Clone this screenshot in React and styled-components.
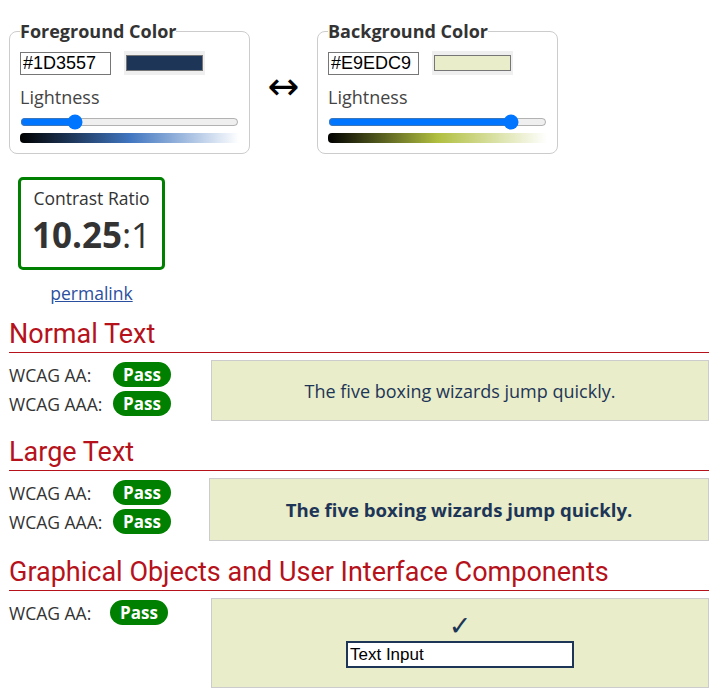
import React from 'react'
import styled, { createGlobalStyle } from 'styled-components'

const Global = createGlobalStyle`
    body {
        margin: 0;
        background: #fff;
        font-family: "Open Sans", sans-serif;
        color: #333;
    }
`

const FG = '#1D3557'
const BG = '#E9EDC9'

// styling
    const Page = styled.div`
        padding: 19px 9px 10px;
        width: 700px;
    `

    const TopRow = styled.div`
        display: flex;
        align-items: center;
    `

    const ColorSet = styled.fieldset`
        width: 241px;
        box-sizing: border-box;
        margin: 0;
        padding: 0 10px 10px;
        border: 1px solid #ccc;
        border-radius: 8px;
        display: flex;
        flex-direction: column;
    `

    const Legend = styled.legend`
        padding: 0;
        font-size: 18px;
        line-height: 24px;
        font-weight: 700;
        color: #333;
    `

    const InputRow = styled.div`
        display: flex;
        align-items: center;
        gap: 13px;
        margin-top: 8px;
    `

    const HexInput = styled.input`
        width: 91px;
        height: 23px;
        box-sizing: border-box;
        border: 1px solid #767676;
        padding: 0 2px;
        font-family: "Liberation Sans", Arial, sans-serif;
        font-size: 18px;
        color: #000;
        outline: none;
    `

    const Swatch = styled.div`
        width: 81px;
        height: 24px;
        box-sizing: border-box;
        background: #efefef;
        padding: 4px 2px;
        display: flex;

        span {
            flex: 1;
            border: 1px solid #767676;
            background: ${p => p.$color};
        }
    `

    const FieldLabel = styled.div`
        font-size: 18px;
        line-height: 24px;
        margin-top: 10px;
        color: #444;
    `

    const Range = styled.input`
        width: 219px;
        height: 16px;
        margin: 5px 0 0;
        accent-color: #0075ff;
    `

    const Gradient = styled.div`
        height: 10px;
        margin-top: 3px;
        border-radius: 4px 0 0 4px;
        background: linear-gradient(to right, #000, ${p => p.$mid}, #fff);
    `

    const Swap = styled.div`
        width: 67px;
        text-align: center;
        font-family: "DejaVu Sans", sans-serif;
        font-size: 38px;
        line-height: 40px;
        color: #000;
        margin-top: -2px;
    `

    const RatioBlock = styled.div`
        display: inline-flex;
        flex-direction: column;
        align-items: center;
        margin: 23px 0 0 9px;
    `

    const RatioBox = styled.div`
        width: 147px;
        height: 93px;
        box-sizing: border-box;
        border: 3px solid #008000;
        border-radius: 5px;
        text-align: center;
        padding-top: 6px;
    `

    const RatioTitle = styled.div`
        font-size: 17.5px;
        line-height: 24px;
    `

    const RatioValue = styled.div`
        font-size: 35px;
        line-height: 44px;
        margin-top: 3px;
        color: #333;

        b { font-weight: 700; }
    `

    const Permalink = styled.a`
        margin-top: 11px;
        font-size: 17.5px;
        line-height: 24px;
        color: #2b4f9f;
    `

    const Heading = styled.h2`
        margin: ${p => p.$top}px 0 0;
        padding-bottom: 3px;
        font-family: Roboto, sans-serif;
        font-weight: 400;
        font-size: 27px;
        line-height: 30px;
        color: #b5121b;
        border-bottom: 1px solid #b5121b;
    `

    const Results = styled.div`
        display: flex;
        margin-top: 7px;
    `

    const Checks = styled.div`
        width: ${p => p.$w}px;
        flex-shrink: 0;
    `

    const CheckRow = styled.div`
        display: flex;
        align-items: center;
        height: 29px;
    `

    const CheckLabel = styled.span`
        width: ${p => p.$w}px;
        font-size: 17.5px;
        color: #333;
    `

    const Badge = styled.span`
        display: inline-block;
        width: 58px;
        height: 25px;
        border-radius: 13px;
        background: #008000;
        color: #fff;
        font-weight: 700;
        font-size: 17px;
        line-height: 25px;
        text-align: center;
    `

    const Sample = styled.div`
        flex: 1;
        height: ${p => p.$h}px;
        box-sizing: border-box;
        background: ${BG};
        border: 1px solid #ccc;
        color: ${FG};
        display: flex;
        flex-direction: column;
        align-items: center;
        justify-content: center;
        font-size: ${p => p.$large ? '18.6px' : '18px'};
        font-weight: ${p => p.$large ? 700 : 400};
    `

    const DemoArea = styled(Sample)`
        justify-content: flex-start;
        padding-top: 13px;
    `

    const Tick = styled.div`
        font-family: "DejaVu Sans", sans-serif;
        font-size: 27px;
        line-height: 27px;
        font-weight: 700;
        color: ${FG};
    `

    const DemoInput = styled.input`
        width: 228px;
        height: 27px;
        box-sizing: border-box;
        border: 2px solid ${FG};
        padding: 0 2px;
        font-family: "Liberation Sans", Arial, sans-serif;
        font-size: 17px;
        color: #000;
        margin: 2px 0 0;
        outline: none;
    `

const ColorPicker = ({ title, hex, mid, lightness }) => (
    <ColorSet>
        <Legend>{title}</Legend>
        <InputRow>
            <HexInput defaultValue={hex} />
            <Swatch $color={hex}><span /></Swatch>
        </InputRow>
        <FieldLabel>Lightness</FieldLabel>
        <Range type="range" min="0" max="100" defaultValue={lightness} />
        <Gradient $mid={mid} />
    </ColorSet>
)

const Pass = ({ label, w = 104 }) => (
    <CheckRow>
        <CheckLabel $w={w}>{label}</CheckLabel>
        <Badge>Pass</Badge>
    </CheckRow>
)

const App = () => {
    const sentence = 'The five boxing wizards jump quickly.'

    return (
        <Page>
            <Global />

            <TopRow>
                <ColorPicker title="Foreground Color" hex="#1D3557" mid="hsl(215, 50%, 50%)" lightness={23} />
                <Swap>↔</Swap>
                <ColorPicker title="Background Color" hex="#E9EDC9" mid="hsl(67, 50%, 50%)" lightness={86} />
            </TopRow>

            <RatioBlock>
                <RatioBox>
                    <RatioTitle>Contrast Ratio</RatioTitle>
                    <RatioValue><b>10.25</b>:1</RatioValue>
                </RatioBox>
                <Permalink href="#">permalink</Permalink>
            </RatioBlock>

            <Heading $top={14}>Normal Text</Heading>
            <Results>
                <Checks $w={202}>
                    <Pass label="WCAG AA:" />
                    <Pass label="WCAG AAA:" />
                </Checks>
                <Sample $h={61}>{sentence}</Sample>
            </Results>

            <Heading $top={16}>Large Text</Heading>
            <Results>
                <Checks $w={200}>
                    <Pass label="WCAG AA:" />
                    <Pass label="WCAG AAA:" />
                </Checks>
                <Sample $h={63} $large>{sentence}</Sample>
            </Results>

            <Heading $top={16}>Graphical Objects and User Interface Components</Heading>
            <Results>
                <Checks $w={202}>
                    <Pass label="WCAG AA:" w={101} />
                </Checks>
                <DemoArea $h={90}>
                    <Tick>✓</Tick>
                    <DemoInput defaultValue="Text Input" />
                </DemoArea>
            </Results>
        </Page>
    )
}

export default App
